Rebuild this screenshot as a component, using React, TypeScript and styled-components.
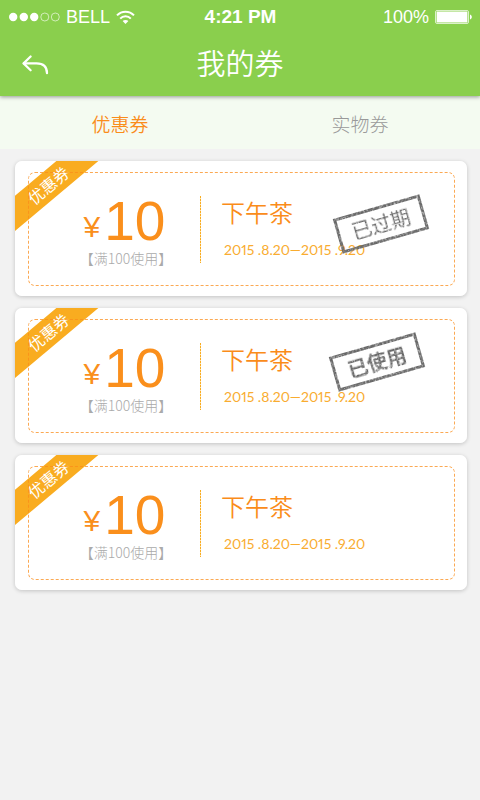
import React from 'react';
import styled, { createGlobalStyle } from 'styled-components';

const GlobalStyle = createGlobalStyle`
  * { box-sizing: border-box; }
  body {
    margin: 0;
    background: #f2f2f2;
    font-family: 'Liberation Sans', 'Noto Sans CJK SC', sans-serif;
  }
  button { font: inherit; border: 0; padding: 0; background: none; cursor: pointer; }
`;

const Header = styled.header`
  position: relative;
  background: #8acf4d;
  color: #fff;
  box-shadow: 0 1px 4px rgba(0, 0, 0, 0.4);
`;

const StatusBar = styled.div`
  display: grid;
  grid-template-columns: 1fr auto 1fr;
  align-items: center;
  height: 34px;
  padding: 0 8px 0 9px;
  font-size: 18px;
  line-height: 20px;
`;

const Signal = styled.div`
  display: flex;
  align-items: center;
  gap: 6px;
`;

const Time = styled.time`
  font-size: 19px;
  font-weight: 700;
`;

const Battery = styled.div`
  display: flex;
  align-items: center;
  justify-content: flex-end;
  gap: 6px;
`;

const NavBar = styled.div`
  display: grid;
  grid-template-columns: 72px 1fr 72px;
  align-items: start;
  height: 62px;
`;

const BackButton = styled.button`
  display: flex;
  align-items: center;
  height: 62px;
  padding-left: 22px;
  color: #fff;
`;

const Title = styled.h1`
  margin: 0;
  font: 350 29px/56px 'Noto Sans CJK SC', sans-serif;
  text-align: center;
`;

const Tabs = styled.nav`
  display: grid;
  grid-template-columns: 1fr 1fr;
  height: 53px;
  background: #f4fbf1;
`;

const Tab = styled.button<{ $active?: boolean }>`
  && { font: ${(p) => (p.$active ? 350 : 300)} 19px/28px 'Noto Sans CJK SC', sans-serif; }
  padding-top: 2px;
  color: ${(p) => (p.$active ? '#fa8c1a' : '#999')};
`;

const CouponList = styled.ul`
  display: grid;
  gap: 12px;
  margin: 0;
  padding: 12px 13px 12px 15px;
  list-style: none;
`;

const CouponItem = styled.li`
  border-radius: 7px;
  box-shadow: 0 1px 4px rgba(0, 0, 0, 0.2);
`;

const Card = styled.article`
  position: relative;
  overflow: hidden;
  padding: 11px 12px 10px 13px;
  border-radius: 7px;
  background: #fff;
`;

const Ribbon = styled.div`
  position: absolute;
  top: 12px;
  left: -28px;
  width: 120px;
  height: 27px;
  padding-left: 4px;
  background: #f9ac20;
  color: #fff;
  font: 400 16px/27px 'Noto Sans CJK SC', sans-serif;
  text-align: center;
  transform: rotate(-40deg);
`;

const Ticket = styled.div`
  position: relative;
  display: grid;
  grid-template-columns: 172px 1fr;
  align-items: center;
  min-height: 114px;
  border: 1px dashed rgba(250, 140, 26, 0.75);
  border-radius: 7px;
`;

const Value = styled.div`
  display: flex;
  flex-direction: column;
  align-items: center;
  justify-content: center;
  height: 67px;
  padding: 3px 0 0 22px;
  background: repeating-linear-gradient(#f9ac20 0 2px, #fde3b0 2px 3px) right / 1px 100% no-repeat;
`;

const Price = styled.div`
  display: flex;
  align-items: flex-end;
  gap: 4px;
  padding-right: 3px;
  color: #fa8f1c;
  font-size: 55px;
  line-height: 54px;
`;

const Currency = styled.span`
  font-size: 30px;
  line-height: 42px;
`;

const Condition = styled.div`
  color: #aaa;
  font: 300 14px/20px 'Noto Sans CJK SC', sans-serif;
  white-space: nowrap;
`;

const Details = styled.div`
  padding: 0 0 4px 20px;
  white-space: nowrap;
`;

const Name = styled.h2`
  margin: 0 0 10px;
  color: #fa8c1a;
  font: 350 24px/36px 'Noto Sans CJK SC', sans-serif;
`;

const Period = styled.p`
  margin: 0;
  padding-left: 3px;
  color: #f9ac30;
  font: 400 14px/20px Lato, sans-serif;
  font-variant-numeric: proportional-nums;
`;

const Stamp = styled.div<{ $bold?: boolean }>`
  position: absolute;
  top: ${(p) => (p.$bold ? 24 : 33)}px;
  right: ${(p) => (p.$bold ? 32 : 28)}px;
  width: 90px;
  height: 36px;
  border: 3px solid #666;
  color: #666;
  font: ${(p) => (p.$bold ? 700 : 400)} 20px/30px 'Noto Sans CJK SC', sans-serif;
  text-align: center;
  transform: rotate(-16deg);
  filter: url(#worn-ink);
`;

const FilterDefs = styled.svg`
  position: absolute;
  width: 0;
  height: 0;
`;

function WornInkFilter() {
  return (
    <FilterDefs aria-hidden="true">
      <filter id="worn-ink" x="0" y="0" width="100%" height="100%">
        <feTurbulence type="fractalNoise" baseFrequency="0.6" numOctaves="2" seed="4" result="noise" />
        <feColorMatrix in="noise" type="matrix" values="0 0 0 0 0  0 0 0 0 0  0 0 0 0 0  0 0 0 -2 1.9" result="mask" />
        <feComposite in="SourceGraphic" in2="mask" operator="in" />
      </filter>
    </FilterDefs>
  );
}

function SignalDots() {
  return (
    <svg width="51" height="10" viewBox="0 0 51 10" fill="#fff" aria-hidden="true">
      <circle cx="4.2" cy="5" r="4.2" />
      <circle cx="14.8" cy="5" r="4.2" />
      <circle cx="25.2" cy="5" r="4.2" />
      <circle cx="35.8" cy="5" r="4" fill="none" stroke="#fff" strokeWidth="0.6" />
      <circle cx="46.3" cy="5" r="4" fill="none" stroke="#fff" strokeWidth="0.6" />
    </svg>
  );
}

function WifiIcon() {
  return (
    <svg width="19" height="15" viewBox="0 0 19 15" fill="none" stroke="#fff" strokeWidth="2" aria-hidden="true">
      <path d="M1 5.4 C5.6 0.4 13.4 0.4 18 5.4" />
      <path d="M4.2 8.6 C7 5.5 12 5.5 14.8 8.6" />
      <path d="M9.5 14 L6.6 11 C8.2 9.5 10.8 9.5 12.4 11 Z" fill="#fff" stroke="none" />
    </svg>
  );
}

function BatteryIcon() {
  return (
    <svg width="37" height="14" viewBox="0 0 37 14" aria-hidden="true">
      <rect x="0.5" y="0.5" width="33" height="13" rx="1.5" fill="none" stroke="#fff" strokeWidth="0.7" />
      <rect x="1.6" y="1.6" width="30.8" height="10.8" rx="0.5" fill="#fff" />
      <path d="M35 4.5 C37.4 5.2 37.4 8.8 35 9.5 Z" fill="#fff" />
    </svg>
  );
}

function BackIcon() {
  return (
    <svg width="28" height="20" viewBox="0 0 28 20" fill="none" stroke="currentColor" strokeWidth="2.2" strokeLinecap="round" strokeLinejoin="round" aria-hidden="true">
      <path d="M8.6 1.5 L1.6 8.4 L8.6 15.3" />
      <path d="M1.8 8.4 H14.5 C21.5 8.4 25 12 25 18.2" />
    </svg>
  );
}

type Coupon = { id: number; stamp?: string; bold?: boolean };

const coupons: Coupon[] = [
  { id: 1, stamp: '已过期' },
  { id: 2, stamp: '已使用', bold: true },
  { id: 3 },
];

function CouponCard({ coupon }: { coupon: Coupon }) {
  return (
    <CouponItem>
      <Card>
        <Ribbon>优惠券</Ribbon>
        <Ticket>
          <Value>
            <Price>
              <Currency>¥</Currency>10
            </Price>
            <Condition>【满100使用】</Condition>
          </Value>
          <Details>
            <Name>下午茶</Name>
            <Period>2015 .8.20—2015 .9.20</Period>
          </Details>
          {coupon.stamp && <Stamp $bold={coupon.bold}>{coupon.stamp}</Stamp>}
        </Ticket>
      </Card>
    </CouponItem>
  );
}

export default function App() {
  return (
    <>
      <GlobalStyle />
      <WornInkFilter />
      <Header>
        <StatusBar>
          <Signal>
            <SignalDots />
            <span>BELL</span>
            <WifiIcon />
          </Signal>
          <Time>4:21 PM</Time>
          <Battery>
            <span>100%</span>
            <BatteryIcon />
          </Battery>
        </StatusBar>
        <NavBar>
          <BackButton type="button" aria-label="返回">
            <BackIcon />
          </BackButton>
          <Title>我的券</Title>
        </NavBar>
      </Header>
      <Tabs>
        <Tab type="button" $active aria-current="page">优惠券</Tab>
        <Tab type="button">实物券</Tab>
      </Tabs>
      <main>
        <CouponList>
          {coupons.map((coupon) => (
            <CouponCard key={coupon.id} coupon={coupon} />
          ))}
        </CouponList>
      </main>
    </>
  );
}
